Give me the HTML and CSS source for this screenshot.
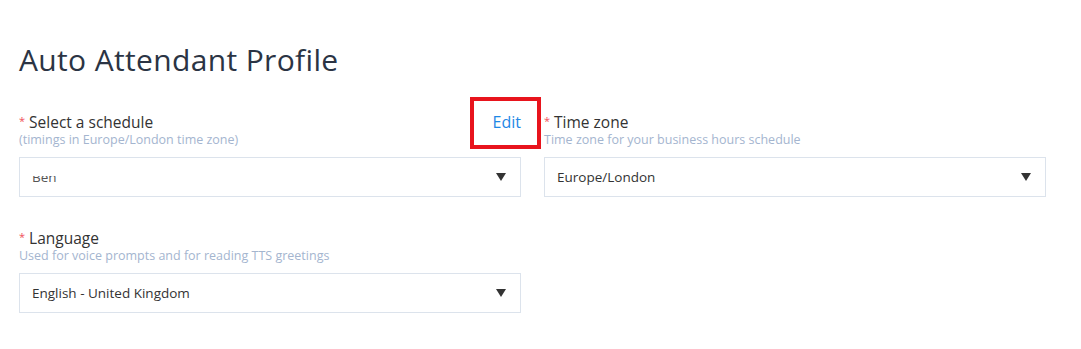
FILE: index.html
```html
<!DOCTYPE html>
<html lang="en">

<head>
    <meta charset="UTF-8">
    <meta name="viewport" content="width=device-width, initial-scale=1.0">
    <title>Auto Attendant Profile</title>
    <link rel="stylesheet" href="styles.css">
</head>

<body>

    <h1 class="page-title">Auto Attendant Profile</h1>

    <div class="form-grid">
        <div class="field">
            <div class="label-row">
                <label class="label"><span class="required">*</span>Select a schedule</label>
                <a class="edit-link" href="#">Edit</a>
            </div>
            <div class="help">(timings in Europe/London time zone)</div>
            <div class="select">
                <span class="value value-clipped">Ben</span>
                <span class="caret"></span>
            </div>
        </div>

        <div class="field">
            <div class="label-row">
                <label class="label"><span class="required">*</span>Time zone</label>
            </div>
            <div class="help">Time zone for your business hours schedule</div>
            <div class="select">
                <span class="value">Europe/London</span>
                <span class="caret"></span>
            </div>
        </div>

        <div class="field">
            <div class="label-row">
                <label class="label"><span class="required">*</span>Language</label>
            </div>
            <div class="help">Used for voice prompts and for reading TTS greetings</div>
            <div class="select">
                <span class="value">English - United Kingdom</span>
                <span class="caret"></span>
            </div>
        </div>
    </div>

</body>

</html>
```

FILE: styles.css
```css
/* Page */
body {
    font-family: 'Open Sans', 'Noto Sans', sans-serif;
    margin: 0;
    padding: 41px 35px 0 19px;
    background: #fff;
    color: #333;
}

.page-title {
    margin: 0 0 33px;
    font-size: 30px;
    line-height: 38px;
    font-weight: 400;
    letter-spacing: 0.35px;
    color: #2b3444;
}

/* Form layout */
.form-grid {
    display: grid;
    grid-template-columns: 502px 502px;
    column-gap: 23px;
    row-gap: 31px;
}

.label-row {
    display: flex;
    justify-content: space-between;
    align-items: flex-start;
    height: 20px;
}

.label {
    font-size: 15.5px;
    line-height: 20px;
    color: #333;
}

.required {
    color: #f0505a;
    font-size: 11px;
    line-height: 10px;
    margin-right: 4px;
    vertical-align: 3px;
}

/* Edit link with red annotation box */
.edit-link {
    position: relative;
    font-size: 16px;
    line-height: 20px;
    color: #1e88e5;
    text-decoration: none;
}

.edit-link::after {
    content: "";
    position: absolute;
    left: -23px;
    right: -20px;
    top: -15px;
    bottom: -17px;
    border: 4px solid #e8141d;
}

.help {
    font-size: 12.5px;
    line-height: 16px;
    color: #a4b5cf;
}

/* Select boxes */
.select {
    margin-top: 9px;
    height: 40px;
    box-sizing: border-box;
    border: 1px solid #dce3ec;
    display: flex;
    align-items: center;
    justify-content: space-between;
    padding: 0 14px 0 12px;
    font-size: 13.5px;
    color: #333;
}

.value-clipped {
    color: #555;
    clip-path: inset(45% 0 0 0);
}

.caret {
    width: 0;
    height: 0;
    border-left: 5px solid transparent;
    border-right: 5px solid transparent;
    border-top: 8px solid #333;
}
```
